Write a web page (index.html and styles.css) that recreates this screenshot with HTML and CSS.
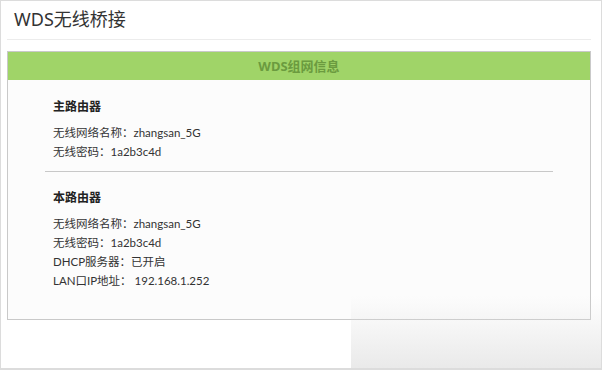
FILE: index.html
```html
<!doctype html>
<html>
<head>
<meta http-equiv="Content-Type" content="text/html; charset=utf-8"/>
<title>WDS无线桥接</title>
<link rel="stylesheet" href="styles.css">
</head>

<body>
<div class="frame">
	<h1 class="page-title">WDS无线桥接</h1>
	<div class="panel">
		<div class="panel-head">WDS组网信息</div>
		<div class="panel-body">
			<div class="group">
				<h2 class="group-title">主路由器</h2>
				<p class="row">无线网络名称：zhangsan_5G</p>
				<p class="row">无线密码：1a2b3c4d</p>
			</div>
			<div class="divider"></div>
			<div class="group">
				<h2 class="group-title">本路由器</h2>
				<p class="row">无线网络名称：zhangsan_5G</p>
				<p class="row">无线密码：1a2b3c4d</p>
				<p class="row">DHCP服务器：已开启</p>
				<p class="row">LAN口IP地址： 192.168.1.252</p>
			</div>
		</div>
	</div>
	<div class="shade"></div>
</div>
</body>
</html>
```

FILE: styles.css
```css
*{ margin:0; padding:0; box-sizing:border-box;}
body{ background:#fff; font-family:"Noto Sans","Noto Sans CJK SC",sans-serif; color:#333;}
.frame{ width:602px; height:370px; border:1px solid #dcdcdc; border-bottom-width:2px; position:relative; overflow:hidden;}
.page-title{ height:39px; line-height:36px; font-size:18px; font-weight:normal; color:#333; margin:0 10px 0 6px; padding-left:7px; border-bottom:1px solid #ececec;}
.panel{ margin:11px 10px 0 6px; border:1px solid #c9c9c9; background:#fcfcfc; padding-bottom:29px;}
.panel-head{ height:28px; line-height:28px; background:#a0d468; text-align:center; font-size:13px; font-weight:bold; color:#6b9b3f;}
.panel-body{ padding:17px 37px 0 37px;}
.group{ padding-left:8px;}
.group-title{ height:20px; line-height:20px; font-size:12px; font-weight:bold; color:#222; margin-bottom:6px;}
.row{ height:19px; line-height:19px; font-size:11.5px; color:#333; font-family:Lato,"Noto Sans CJK SC",sans-serif;}
.divider{ height:1px; background:#c8c8c8; margin:10px 0 16px;}
.shade{ position:absolute; right:0; bottom:0; width:250px; height:72px; background:linear-gradient(to bottom, rgba(255,255,255,0) 0%, rgba(222,222,222,0.65) 100%);}
```
